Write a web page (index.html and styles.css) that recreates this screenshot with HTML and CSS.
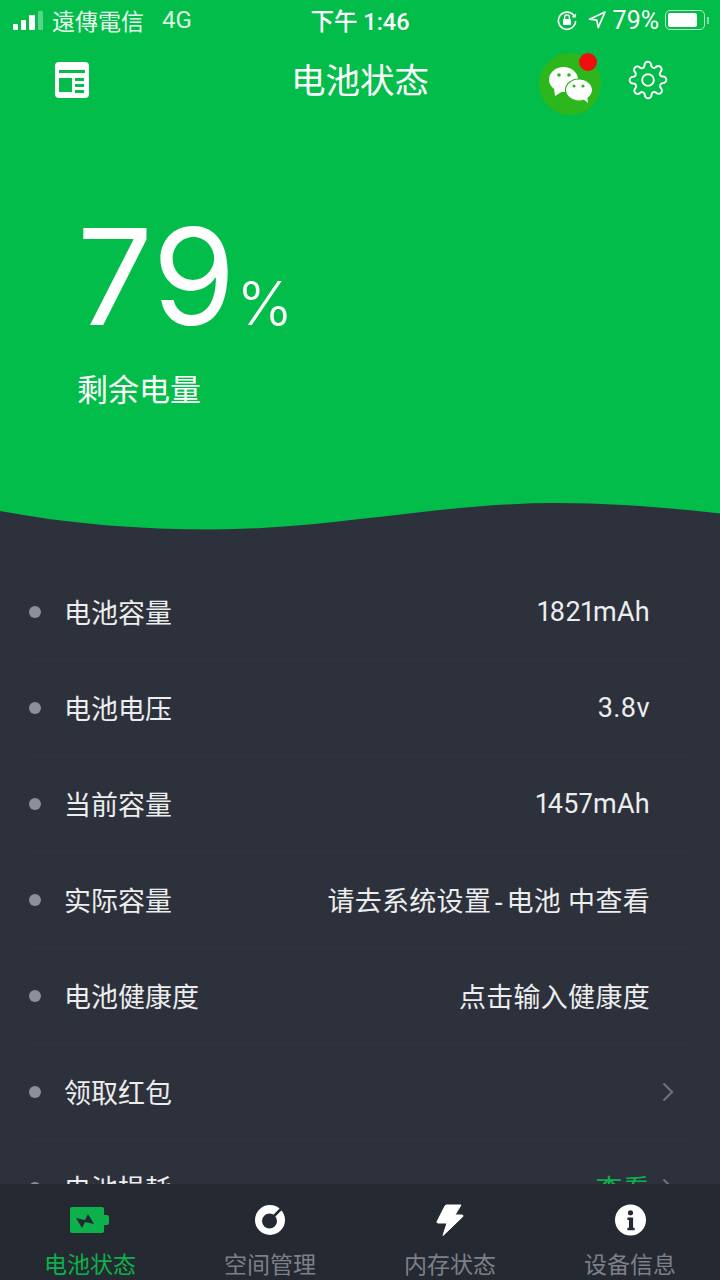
FILE: index.html
```html
<!DOCTYPE html>
<html lang="zh-CN">
<head>
  <meta charset="UTF-8" />
  <meta name="viewport" content="width=device-width, initial-scale=1" />
  <title>电池状态</title>
  <link rel="stylesheet" href="styles.css">
</head>
<body>
  <div class="page">
    <section class="top">
      <!-- status bar -->
      <div class="status">
        <div class="status-left">
          <span class="signal"><i class="b1"></i><i class="b2"></i><i class="b3"></i><i class="b4"></i></span>
          <span class="carrier">遠傳電信</span>
          <span class="net">4G</span>
        </div>
        <div class="status-time">下午 1:46</div>
        <div class="status-right">
          <svg class="ic-lock" width="22" height="22" viewBox="0 0 22 22" fill="none" stroke="#fff" stroke-width="1.6">
            <path d="M18.5 7.5A8.6 8.6 0 1 0 19.6 12"/>
            <path d="M16.4 7.6l2.6.4.6-2.8" stroke-width="1.4"/>
            <rect x="7" y="10" width="8" height="6" rx="1" fill="#fff" stroke="none"/>
            <path d="M8.6 10V8.2a2.4 2.4 0 0 1 4.8 0V10" stroke-width="1.3"/>
          </svg>
          <svg class="ic-loc" width="18" height="18" viewBox="0 0 18 18" fill="none" stroke="#fff" stroke-width="1.7" stroke-linejoin="round">
            <path d="M17 1L1.5 8.2l7.3.9 1.4 7.6z"/>
          </svg>
          <span class="pct">79%</span>
          <span class="batt"><span class="batt-fill"></span></span>
          <span class="batt-nub"></span>
        </div>
      </div>

      <!-- nav bar -->
      <div class="nav">
        <div class="nav-left">
          <svg width="34" height="36" viewBox="0 0 34 36">
            <rect x="0" y="0" width="34" height="36" rx="4" fill="#fff"/>
            <g fill="#02bd4a">
              <rect x="4" y="8" width="26" height="3"/>
              <rect x="4" y="16" width="13" height="14"/>
              <rect x="20" y="16" width="9" height="3"/>
              <rect x="20" y="22" width="9" height="3"/>
              <rect x="20" y="28" width="9" height="3"/>
            </g>
          </svg>
        </div>
        <h1 class="nav-title">电池状态</h1>
        <div class="nav-right">
          <div class="wechat">
            <svg width="62" height="62" viewBox="0 0 62 62">
              <circle cx="31" cy="31" r="31" fill="#2cb71d"/>
              <ellipse cx="24.500" cy="26.500" rx="14.500" ry="12.500" fill="#fff"/>
              <path d="M15 35l1 8 8-5z" fill="#fff"/>
              <ellipse cx="40" cy="37" rx="13.500" ry="11" fill="#fff" stroke="#2cb71d" stroke-width="1.200"/>
              <path d="M43 45l6 5-1-8z" fill="#fff"/>
              <g fill="#2cb71d">
                <circle cx="20" cy="22" r="1.800"/>
                <circle cx="30" cy="22" r="1.800"/>
                <circle cx="35" cy="33" r="1.600"/>
                <circle cx="44" cy="33" r="1.600"/>
              </g>
            </svg>
            <span class="wechat-dot"></span>
          </div>
          <svg width="40" height="40" viewBox="0 0 24 24" fill="none" stroke="#fff" stroke-width="1.150" stroke-linejoin="round">
            <circle cx="12" cy="12" r="3.500"/>
            <path d="M19.400 15a1.650 1.650 0 0 0 .33 1.820l.06.06a2 2 0 1 1-2.830 2.830l-.06-.06a1.650 1.650 0 0 0-2.800 1.170V21a2 2 0 1 1-4 0v-.09a1.650 1.650 0 0 0-2.800-1.170l-.06.06a2 2 0 1 1-2.830-2.830l.06-.06a1.650 1.650 0 0 0-1.170-2.800H3a2 2 0 1 1 0-4h.09a1.650 1.650 0 0 0 1.170-2.800l-.06-.06a2 2 0 1 1 2.830-2.830l.06.06a1.650 1.650 0 0 0 2.800-1.170V3a2 2 0 1 1 4 0v.09a1.650 1.650 0 0 0 2.800 1.170l.06-.06a2 2 0 1 1 2.830 2.830l-.06.06a1.650 1.650 0 0 0 1.170 2.800H21a2 2 0 1 1 0 4h-.09a1.650 1.650 0 0 0-1.510 1z"/>
          </svg>
        </div>
      </div>

      <!-- battery level -->
      <div class="level">
        <div class="level-num">79<span class="level-pct">%</span></div>
        <div class="level-label">剩余电量</div>
      </div>

      <svg class="wave" width="720" height="30" viewBox="0 0 720 30" preserveAspectRatio="none">
        <path d="M0 11C70 24 140 29.500 212 29.500C330 29.500 440 3 556 3C615 3 670 8 720 13.500V30H0Z" fill="#2c313c"/>
      </svg>
    </section>

    <section class="list">
      <div class="row">
        <span class="dot"></span><span class="row-label">电池容量</span>
        <span class="row-value">1821mAh</span>
      </div>
      <div class="row">
        <span class="dot"></span><span class="row-label">电池电压</span>
        <span class="row-value">3.8v</span>
      </div>
      <div class="row">
        <span class="dot"></span><span class="row-label">当前容量</span>
        <span class="row-value">1457mAh</span>
      </div>
      <div class="row">
        <span class="dot"></span><span class="row-label">实际容量</span>
        <span class="row-value">请去系统设置<span class="sep">-</span>电池 中查看</span>
      </div>
      <div class="row">
        <span class="dot"></span><span class="row-label">电池健康度</span>
        <span class="row-value">点击输入健康度</span>
      </div>
      <div class="row">
        <span class="dot"></span><span class="row-label">领取红包</span>
        <span class="row-value"></span>
        <svg class="chev" width="12" height="20" viewBox="0 0 12 20" fill="none" stroke="#6c707a" stroke-width="2.200"><path d="M1.500 1.500L10 10l-8.500 8.500"/></svg>
      </div>
      <div class="row">
        <span class="dot"></span><span class="row-label">电池损耗</span>
        <span class="row-value is-green">查看</span>
        <svg class="chev" width="12" height="20" viewBox="0 0 12 20" fill="none" stroke="#6c707a" stroke-width="2.200"><path d="M1.500 1.500L10 10l-8.500 8.500"/></svg>
      </div>
    </section>

    <nav class="tabs">
      <div class="tab is-active">
        <svg width="40" height="26" viewBox="0 0 40 26">
          <path d="M2 0h30a2 2 0 0 1 2 2v6h3a2 2 0 0 1 2 2v6a2 2 0 0 1-2 2h-3v6a2 2 0 0 1-2 2H2a2 2 0 0 1-2-2V2a2 2 0 0 1 2-2z" fill="#0cb14b"/>
          <path d="M6 11l9 2 3-6 6 10-9-2-3 6z" fill="#252932"/>
        </svg>
        <span>电池状态</span>
      </div>
      <div class="tab">
        <svg width="30" height="30" viewBox="0 0 30 30">
          <circle cx="15" cy="15" r="15" fill="#fff"/>
          <circle cx="14.500" cy="16" r="7.500" fill="#252932"/>
          <path d="M19 11L26 4" stroke="#252932" stroke-width="2.500"/>
        </svg>
        <span>空间管理</span>
      </div>
      <div class="tab">
        <svg width="28" height="32" viewBox="0 0 28 32">
          <path d="M10 1h15L19 11h7a1 1 0 0 1 .8 1.600L7 31.500 11 19H2a1 1 0 0 1-.9-1.500L9 2z" fill="#fff" stroke="#fff" stroke-linejoin="round"/>
        </svg>
        <span>内存状态</span>
      </div>
      <div class="tab">
        <svg width="31" height="31" viewBox="0 0 30 30">
          <circle cx="15" cy="15" r="15" fill="#fff"/>
          <circle cx="15" cy="8" r="2.500" fill="#252932"/>
          <path d="M12 12.500h5.500v10h1.500v2.500h-7v-2.500h1.500v-7.500H12z" fill="#252932"/>
        </svg>
        <span>设备信息</span>
      </div>
    </nav>
  </div>
</body>
</html>
```

FILE: styles.css
```css
* {
  box-sizing: border-box;
}
body {
  margin: 0;
  background: #2c313c;
  font-family: Roboto, "Noto Sans CJK SC", sans-serif;
  color: #fff;
}
.page {
  width: 720px;
  height: 1280px;
  display: flex;
  flex-direction: column;
  overflow: hidden;
}

/* top green part */
.top {
  background: #02bd4a;
  flex-shrink: 0;
}
.status {
  height: 40px;
  padding: 0 11px 0 13px;
  display: grid;
  grid-template-columns: 1fr auto 1fr;
  align-items: center;
}
.status-left {
  display: flex;
  align-items: center;
  line-height: 38px;
}
.signal {
  display: flex;
  align-items: flex-end;
  gap: 3px;
  height: 20px;
  width: 39px;
}
.signal i {
  display: block;
  width: 5px;
  background: #fff;
  border-radius: 1px;
}
.signal .b1 { height: 6px; }
.signal .b2 { height: 10px; }
.signal .b3 { height: 15px; width: 6px; }
.signal .b4 { height: 19px; opacity: 0.35; }
.carrier {
  font-family: "Noto Sans CJK TC", sans-serif;
  font-size: 23px;
  opacity: 0.9;
}
.net {
  font-size: 24px;
  margin-left: 18px;
  opacity: 0.85;
}
.status-time {
  font-size: 23.500px;
  font-weight: 500;
  font-family: Roboto, "Noto Sans CJK TC", sans-serif;
  margin-right: 2px;
}
.status-right {
  display: flex;
  align-items: center;
  justify-content: flex-end;
}
.ic-loc {
  margin-left: 10px;
}
.pct {
  font-size: 25px;
  margin-left: 7px;
}
.batt {
  width: 40px;
  height: 20px;
  margin-left: 6px;
  padding: 2px;
  border: 1px solid rgba(255, 255, 255, 0.7);
  border-radius: 5px;
  display: block;
}
.batt-fill {
  display: block;
  width: 29px;
  height: 14px;
  background: #fff;
  border-radius: 2px;
}
.batt-nub {
  width: 2px;
  height: 7px;
  margin-left: 2px;
  background: rgba(255, 255, 255, 0.5);
}

.nav {
  height: 80px;
  display: grid;
  grid-template-columns: 1fr auto 1fr;
  align-items: center;
}
.nav-left {
  padding-left: 55px;
  display: flex;
}
.nav-title {
  margin: 0 0 4px;
  font-size: 34.500px;
  font-weight: 400;
}
.nav-right {
  display: flex;
  align-items: center;
  justify-content: flex-end;
  gap: 27px;
  padding-right: 52px;
}
.wechat {
  position: relative;
  width: 62px;
  height: 62px;
  margin-top: 8px;
}
.wechat svg {
  display: block;
}
.wechat-dot {
  position: absolute;
  top: 0;
  right: 4px;
  width: 18px;
  height: 18px;
  border-radius: 50%;
  background: #f00f0f;
}

.level {
  height: 380px;
  padding: 84px 0 0 77px;
}
.level-num {
  font-family: Inter, Roboto, sans-serif;
  font-size: 134px;
  font-weight: 400;
  line-height: 144px;
  letter-spacing: 1px;
}
.level-pct {
  font-size: 60px;
  font-weight: 300;
  letter-spacing: 0;
}
.level-label {
  font-size: 31px;
  margin-top: -10px;
}
.wave {
  display: block;
}

/* list */
.list {
  flex: 1;
  min-height: 0;
  overflow: hidden;
  padding: 34px 32px 0 29px;
}
.row {
  height: 96px;
  padding-right: 38px;
  display: flex;
  align-items: center;
  border-bottom: 1px solid #32373f;
  font-size: 27px;
  color: #eceded;
}
.dot {
  width: 12px;
  height: 12px;
  border-radius: 50%;
  background: #8d9098;
  margin-right: 23px;
  flex-shrink: 0;
}
.row-value {
  margin-left: auto;
  letter-spacing: 0.3px;
  font-variant-numeric: proportional-nums;
}
.sep {
  font-family: "Liberation Sans", sans-serif;
  padding: 0 3px;
}
.is-green {
  color: #0cb14b;
}
.chev {
  margin: 0 -24px 0 12px;
}

/* tab bar */
.tabs {
  height: 96px;
  flex-shrink: 0;
  background: #252932;
  display: grid;
  grid-template-columns: repeat(4, 1fr);
}
.tab {
  display: flex;
  flex-direction: column;
  align-items: center;
  font-size: 23px;
  color: #7d8088;
}
.tab svg {
  height: 36px;
  margin-top: 18px;
  flex-shrink: 0;
}
.tab span {
  margin-top: 8px;
}
.tab.is-active {
  color: #0cb14b;
}
```
